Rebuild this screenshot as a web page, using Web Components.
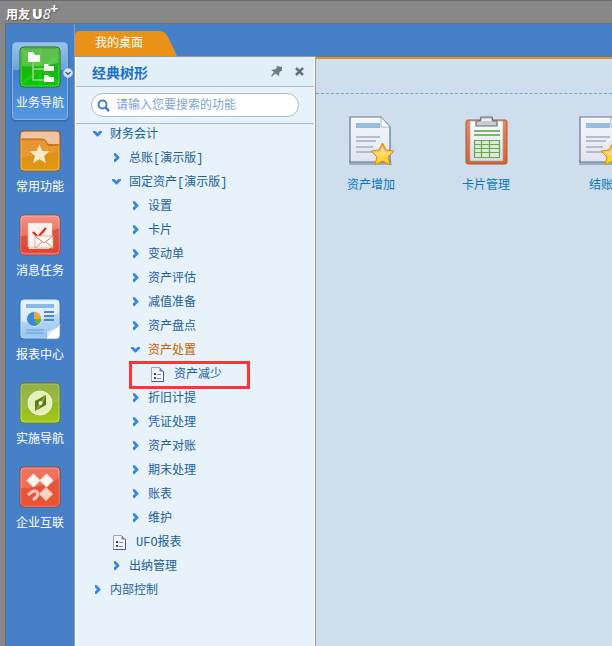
<!DOCTYPE html>
<html lang="zh-CN">
<head>
<meta charset="utf-8">
<title>用友 U8+</title>
<style>
    html, body {
        margin: 0;
        height: 100%;
    }
    body {
        background: #878787;
        font: 12px/16px "Liberation Mono", "Noto Sans CJK SC", monospace;
        overflow: hidden;
    }
</style>
</head>
<body>
<u8-shell>
    <u8-brand slot="brand"></u8-brand>
    <u8-nav slot="nav">
        <nav-item icon="tree" active>业务导航</nav-item>
        <nav-item icon="folder">常用功能</nav-item>
        <nav-item icon="mail">消息任务</nav-item>
        <nav-item icon="report">报表中心</nav-item>
        <nav-item icon="compass">实施导航</nav-item>
        <nav-item icon="link">企业互联</nav-item>
    </u8-nav>
    <u8-tab slot="tabs">我的桌面</u8-tab>
    <tree-panel heading="经典树形" hint="请输入您要搜索的功能">
        <tree-branch label="财务会计" open>
            <tree-branch label="总账[演示版]"></tree-branch>
            <tree-branch label="固定资产[演示版]" open>
                <tree-branch label="设置"></tree-branch>
                <tree-branch label="卡片"></tree-branch>
                <tree-branch label="变动单"></tree-branch>
                <tree-branch label="资产评估"></tree-branch>
                <tree-branch label="减值准备"></tree-branch>
                <tree-branch label="资产盘点"></tree-branch>
                <tree-branch label="资产处置" open current>
                    <tree-leaf marked>资产减少</tree-leaf>
                </tree-branch>
                <tree-branch label="折旧计提"></tree-branch>
                <tree-branch label="凭证处理"></tree-branch>
                <tree-branch label="资产对账"></tree-branch>
                <tree-branch label="期末处理"></tree-branch>
                <tree-branch label="账表"></tree-branch>
                <tree-branch label="维护"></tree-branch>
            </tree-branch>
            <tree-leaf>UFO报表</tree-leaf>
            <tree-branch label="出纳管理"></tree-branch>
        </tree-branch>
        <tree-branch label="内部控制"></tree-branch>
    </tree-panel>
    <u8-desktop>
        <desk-item icon="doc">资产增加</desk-item>
        <desk-item icon="clipboard">卡片管理</desk-item>
        <desk-item icon="doc">结账</desk-item>
    </u8-desktop>
</u8-shell>

<script>
// rounded tile with a top and bottom colour, shared by the nav icons
const tile = (name, top, bottom, edge, inner) => `
    <svg viewBox="0 0 42 42" width="42" height="42" aria-hidden="true">
        <defs>
            <linearGradient id="${name}" x1="0" y1="0" x2="0" y2="1">
                <stop offset="0" stop-color="${top}"/>
                <stop offset="1" stop-color="${bottom}"/>
            </linearGradient>
        </defs>
        <rect x="1" y="1" width="40" height="40" rx="4" fill="url(#${name})" stroke="${edge}"/>
        <rect x="2" y="2" width="38" height="38" rx="3" fill="none" stroke="#fff" stroke-opacity=".35"/>
        ${inner}
    </svg>`;

const doc = `
    <svg viewBox="0 0 48 50" width="48" height="50" aria-hidden="true">
        <defs>
            <linearGradient id="paper" x1="0" y1="0" x2="0" y2="1">
                <stop offset="0" stop-color="#f4f8fd"/><stop offset="1" stop-color="#e2e5ee"/>
            </linearGradient>
            <linearGradient id="gold" x1="0" y1="0" x2="0" y2="1">
                <stop offset="0" stop-color="#f59d1c"/><stop offset=".5" stop-color="#ffd35a"/><stop offset="1" stop-color="#ffd800"/>
            </linearGradient>
        </defs>
        <path d="M2 44h42l1 5H2z" fill="#7e8da3" opacity=".6"/>
        <path d="M3 1h31l9 10v35H3z" fill="url(#paper)" stroke="#65759c" stroke-width="1.200"/>
        <path d="M34 1v10h9z" fill="#fff" stroke="#98a6ba" stroke-width=".8"/>
        <path d="M9 7h24v5H9z" fill="#93bee1"/>
        <path d="M9 21h24M9 25h20M9 31h17M9 36h17" stroke="#b6bcd0" stroke-width="1.800"/>
        <path d="M35.500 27l3.500 7 8 1-6 6 2 8-7.500-4-7.500 4 2-8-6-6 8-1z" fill="url(#gold)" stroke="#d88913" stroke-linejoin="round"/>
        <path d="M35.500 30l2.500 6 6 .5-9 3-8-3 6-.5z" fill="#ffe9a8" opacity=".55"/>
    </svg>`;

const clipboard = `
    <svg viewBox="0 0 48 50" width="48" height="50" aria-hidden="true">
        <defs>
            <linearGradient id="board" x1="0" y1="0" x2="0" y2="1">
                <stop offset="0" stop-color="#e08b63"/><stop offset="1" stop-color="#cf6334"/>
            </linearGradient>
            <linearGradient id="sheet" x1="0" y1="0" x2="0" y2="1">
                <stop offset="0" stop-color="#fff"/><stop offset="1" stop-color="#d9dae4"/>
            </linearGradient>
        </defs>
        <rect x="4" y="4" width="41" height="44" rx="2" fill="url(#board)" stroke="#b9572f"/>
        <path d="M8 5h33v40H8z" fill="url(#sheet)" stroke="#a9a4ac" stroke-width=".7"/>
        <path d="M14 10V6q0-1 1-1h3l1-4h11l1 4h3q1 0 1 1v4z" fill="#c6ced3" stroke="#666d75" stroke-width="1.200"/>
        <path d="M20 4h9" stroke="#eef2f5" stroke-width="2"/>
        <path d="M12 15h26M12 19h26" stroke="#80b46c" stroke-width="2"/>
        <path d="M12.500 24.500h25v17h-25z" fill="#dcebd6" stroke="#6ba657" stroke-width="1.200"/>
        <path d="M12 28.500h26M12 32.500h26M12 36.500h26M19.500 24v17M27.500 24v17" stroke="#6ba657" stroke-width="1.200"/>
    </svg>`;

const icons = {
    tree: tile('g1', '#2f9f1c', '#06c800', '#147a14', `
        <path d="M2 4l38 34M40 10L2 38M21 2v38" stroke="#5de34c" stroke-opacity=".22" stroke-width="3"/>
        <path d="M3 3h36v14Q20 22 3 20z" fill="#b6e8a5" opacity=".38"/>
        <path d="M14 17v17h12M14 23h12" fill="none" stroke="#91dc86" stroke-width="1.500"/>
        <path d="M9 6h5l2 3h5v7H9zM25 18h4l1 2h5v5H25zM25 29h4l1 2h5v5H25z" fill="#fbfff5"/>`),
    folder: tile('g2', '#df8219', '#e09a10', '#955b20', `
        <path d="M2 4q0-2 2-2h34q2 0 2 2v10H29l-4-5H2z" fill="#f4c4a2"/>
        <path d="M2 9h21q4 0 6 6h11" fill="none" stroke="#b56616"/>
        <path d="M2 10h21q4 0 6 6h11v6Q20 24 2 28z" fill="#f1a74f" opacity=".45"/>
        <path d="M20.500 13.500l3 7 8 .5-6 5 2 8-7-4.500-7 4.500 2-8-6-5 8-.5z" fill="#fbeac8" stroke="#c98022" stroke-width=".6"/>`),
    mail: tile('g3', '#ee9385', '#e8503c', '#9c4a57', `
        <path d="M2 22Q22 22 40 14v24H2z" fill="#d93928" opacity=".55"/>
        <path d="M11 11v23h19" fill="none" stroke="#ffd9cf" stroke-width="2"/>
        <path d="M9 9h24v24H9z" fill="#fbf1ef" stroke="#e9b8b0" stroke-width=".6"/>
        <path d="M14 18l5 5 8-9" fill="none" stroke="#dc3424" stroke-width="2.400"/>
        <path d="M16 22h18v12H16z" fill="#fff8ef" stroke="#d3a595" stroke-width=".8"/>
        <path d="M16 22l9 7 9-7M16 34l7-6M34 34l-7-6" fill="none" stroke="#bd8a7b"/>`),
    report: tile('g4', '#d3e8fb', '#95c5f0', '#3273b4', `
        <path d="M2 3h38v12Q20 24 2 24z" fill="#f4faff" opacity=".6"/>
        <path d="M7 6h28v4H7z" fill="#8bb8e8"/>
        <path d="M25 14h10M25 18h10M25 22h10" stroke="#4c86cd" stroke-width="1.800"/>
        <path d="M7 32h18M7 35h18" stroke="#5f9bd8" stroke-width="1.200"/>
        <circle cx="15" cy="21" r="7.500" fill="#3a8bd4" stroke="#d2e9fb"/>
        <path d="M15 21v-7a7 7 0 0 1 7 7z" fill="#f4a82c"/>
        <path d="M15 21h7a7 7 0 0 1-4 6z" fill="#6ab23b"/>
        <path d="M41 25v12q0 4-4 4H27q2-3 1-8 7 1 13-8z" fill="#fff" stroke="#6b9fd3" stroke-width=".8"/>
        <path d="M41 25q-5 7-13 8 1 5-1 8z" fill="#dcebf9"/>`),
    compass: tile('g5', '#7ea02a', '#a4cc17', '#5d7b2d', `
        <path d="M2 4q0-2 2-2h34q2 0 2 2v16Q20 20 2 30z" fill="#a9c466" opacity=".45"/>
        <circle cx="21" cy="21" r="12" fill="#e6efb9" stroke="#f4f8dc"/>
        <path d="M27 13v10l-11 6V19z" fill="#587b16"/>
        <path d="M16 29l4-8 3 2zM27 13l-7 8 4 0z" fill="#87a540"/>
        <circle cx="21.500" cy="21" r="2" fill="#f1f5d3"/>`),
    link: tile('g6', '#ec7660', '#fa6840', '#9c3c45', `
        <path d="M2 22Q22 22 40 12v28H2z" fill="#d83a20" opacity=".45"/>
        <path d="M14.500 8l6.500 6.500-6.500 6.500L8 14.500zM27.500 8l6.500 6.500-6.500 6.500-6.500-6.500z" fill="#fff5ee" stroke="#fff0e9" stroke-linejoin="round"/>
        <path d="M27 21.500l6.500 6.500-6.500 6.500-6.500-6.500z" fill="#fcd2c6" stroke="#fcd2c6" stroke-linejoin="round"/>
        <path d="M9 29q6-6 9-3 3 3-4 8" fill="none" stroke="#fbc9bd" stroke-width="3"/>`),
    doc,
    clipboard
};

class U8Shell extends HTMLElement {
    constructor(){
        super();
        this.attachShadow({mode:'open'});
        this.shadowRoot.innerHTML = `
            <style>
            :host {
                display: flex;
                flex-direction: column;
                height: 100vh;
            }
            header {
                box-sizing: border-box;
                height: 23px;
                border-top: 1px solid #6b6b6b;
                background: #878787;
            }
            .frame {
                flex: 1;
                display: flex;
                min-height: 0;
                margin-left: 5px;
                border-top: 1px solid #6a6e76;
                border-left: 1px solid #6a6e76;
                background: #4681c8;
            }
            .side {
                border-right: 1px solid #8e9dae;
            }
            main {
                flex: 1;
                min-width: 0;
                display: flex;
                flex-direction: column;
            }
            .tabs {
                display: flex;
                align-items: flex-end;
                height: 32px;
            }
            .work {
                flex: 1;
                display: flex;
                min-height: 0;
            }
            </style>
            <header><slot name="brand"></slot></header>
            <div class="frame">
                <div class="side"><slot name="nav"></slot></div>
                <main>
                    <div class="tabs"><slot name="tabs"></slot></div>
                    <div class="work"><slot></slot></div>
                </main>
            </div>`;
    }
}

class U8Brand extends HTMLElement {
    constructor(){
        super();
        this.attachShadow({mode:'open'});
        this.shadowRoot.innerHTML = `
            <style>
            :host {
                display: flex;
                align-items: center;
                gap: 2px;
                padding: 4px 0 0 6px;
                color: #fff;
                line-height: 18px;
                text-shadow: 1px 1px 1px #555;
            }
            .cn {
                font-family: "Noto Sans CJK SC", sans-serif;
                font-weight: bold;
            }
            .u8 {
                display: flex;
                font: 800 14px/18px "Open Sans", sans-serif;
            }
            i {
                font-weight: normal;
            }
            sup {
                font: bold 14px/8px "Open Sans", sans-serif;
            }
            </style>
            <span class="cn">用友</span>
            <span class="u8">U<i>8</i><sup>+</sup></span>`;
    }
}

class U8Nav extends HTMLElement {
    constructor(){
        super();
        this.attachShadow({mode:'open'});
        this.shadowRoot.innerHTML = `
            <style>
            :host {
                display: block;
            }
            nav {
                display: flex;
                flex-direction: column;
                gap: 6px;
                padding: 18px 6px 0;
            }
            </style>
            <nav><slot></slot></nav>`;
    }
}

class NavItem extends HTMLElement {
    constructor(){
        super();
        this.attachShadow({mode:'open'});
    }
    connectedCallback(){
        const active = this.hasAttribute('active');
        this.shadowRoot.innerHTML = `
            <style>
            :host {
                display: block;
                position: relative;
            }
            button {
                box-sizing: border-box;
                display: flex;
                flex-direction: column;
                align-items: center;
                gap: 8px;
                width: 56px;
                height: 78px;
                padding: 3px 0 0;
                border: 1px solid transparent;
                border-radius: 4px;
                background: none;
                color: #fff;
                font: inherit;
                white-space: nowrap;
                cursor: pointer;
            }
            svg {
                flex: none;
            }
            :host([active]) button {
                border-color: #7fb2e6;
                background: linear-gradient(#9cc1e9, #6da2dc 35%, #3f7fcb 36%, #5597e0);
                box-shadow: 0 1px 2px #2a5a9b;
            }
            .more {
                position: absolute;
                right: -5px;
                top: 26px;
            }
            </style>
            <button type="button">${icons[this.getAttribute('icon')]}<span><slot></slot></span></button>
            ${active ? `<svg class="more" width="10" height="10" viewBox="0 0 10 10" aria-hidden="true">
                <circle cx="5" cy="5" r="4.500" fill="#dbe8f6" stroke="#adc5df"/>
                <path d="M2.500 4L5 6.500 7.500 4" fill="none" stroke="#3c5f91" stroke-width="1.500"/>
            </svg>` : ''}`;
    }
}

class U8Tab extends HTMLElement {
    constructor(){
        super();
        this.attachShadow({mode:'open'});
        this.shadowRoot.innerHTML = `
            <style>
            :host {
                display: block;
            }
            button {
                width: 102px;
                height: 25px;
                padding: 0 14px 0 0;
                border: 0;
                background: #e99217;
                color: #fff;
                font: inherit;
                clip-path: path('M0 25V5Q0 0 5 0H84Q90 0 93 6L102 25Z');
                cursor: pointer;
            }
            </style>
            <button type="button"><slot></slot></button>`;
    }
}

class TreePanel extends HTMLElement {
    constructor(){
        super();
        this.attachShadow({mode:'open'});
    }
    connectedCallback(){
        this.shadowRoot.innerHTML = `
            <style>
            :host {
                box-sizing: border-box;
                flex: none;
                width: 241px;
                border-top: 1px solid #999;
                border-right: 1px solid #999;
                background: #e7f2fb;
                box-shadow: inset 1px 1px #fff, inset -1px 0 #fff;
            }
            header {
                display: flex;
                align-items: center;
                gap: 12px;
                height: 29px;
                padding: 0 9px 0 16px;
                margin: 0 1px;
                background: #e1eff9;
                border-bottom: 1px solid #a5bdd5;
            }
            h2 {
                flex: 1;
                margin: 0;
                color: #1b70c9;
                font: bold 14px/20px "Noto Sans CJK SC", sans-serif;
            }
            header button {
                width: 11px;
                height: 11px;
                padding: 0;
                border: 0;
                background: none;
                cursor: pointer;
            }
            svg {
                display: block;
            }
            .search {
                margin: 0 1px;
                padding: 6px 15px;
                border-bottom: 1px solid #a5bdd5;
            }
            label {
                box-sizing: border-box;
                display: flex;
                align-items: center;
                gap: 6px;
                height: 24px;
                padding: 0 6px 0 5px;
                border: 1px solid #a5bdd5;
                border-radius: 12px;
                background: #fff;
            }
            input {
                flex: 1;
                min-width: 0;
                padding: 2px 0 0;
                border: 0;
                outline: 0;
                background: none;
                font: inherit;
                line-height: 20px;
            }
            input::placeholder {
                color: #7ca5d6;
                opacity: 1;
            }
            .tree {
                padding-left: 18px;
            }
            </style>
            <header>
                <h2>${this.getAttribute('heading')}</h2>
                <button type="button" aria-label="固定">
                    <svg width="11" height="11" viewBox="0 0 11 11"><path d="M6 0l5 1v3.500L8.500 6 8 10 4.500 7.500 1 10.500 0 10l3-4L0 4l5-1z" fill="#6d7985"/></svg>
                </button>
                <button type="button" aria-label="关闭">
                    <svg width="11" height="11" viewBox="0 0 11 11"><path d="M2 2l7 7M9 2L2 9" stroke="#66727d" stroke-width="2.500"/></svg>
                </button>
            </header>
            <div class="search">
                <label>
                    <svg width="13" height="13" viewBox="0 0 13 13" aria-hidden="true">
                        <circle cx="5.500" cy="5.500" r="4" fill="none" stroke="#447fc9" stroke-width="2"/>
                        <path d="M8.500 8.500l3.500 3.500" stroke="#447fc9" stroke-width="2.500"/>
                    </svg>
                    <input type="text" aria-label="搜索" placeholder="${this.getAttribute('hint')}">
                </label>
            </div>
            <div class="tree"><slot></slot></div>`;
    }
}

class TreeBranch extends HTMLElement {
    constructor(){
        super();
        this.attachShadow({mode:'open'});
    }
    connectedCallback(){
        this.shadowRoot.innerHTML = `
            <style>
            :host {
                display: block;
            }
            button {
                display: flex;
                align-items: center;
                gap: 8px;
                width: 100%;
                height: 24px;
                padding: 0 0 2px;
                border: 0;
                background: none;
                color: #1c5f9c;
                font: inherit;
                white-space: nowrap;
                cursor: pointer;
            }
            :host([current]) > button {
                color: #c66300;
            }
            svg {
                flex: none;
                margin-bottom: 4px;
            }
            :host([open]) > button svg {
                transform: rotate(90deg);
            }
            .children {
                display: none;
                padding-left: 19px;
            }
            :host([open]) > .children {
                display: block;
            }
            </style>
            <button type="button">
                <svg width="9" height="9" viewBox="0 0 9 9" aria-hidden="true">
                    <path d="M2 0v2.500l2 2-2 2V9h1.500L7.500 5V4L3.500 0z" fill="#3a86df"/>
                </svg>
                <span>${this.getAttribute('label')}</span>
            </button>
            <div class="children"><slot></slot></div>`;
        this.shadowRoot.querySelector('button').addEventListener('click', () => {
            this.toggleAttribute('open');
        });
    }
}

class TreeLeaf extends HTMLElement {
    constructor(){
        super();
        this.attachShadow({mode:'open'});
        this.shadowRoot.innerHTML = `
            <style>
            :host {
                display: block;
                position: relative;
            }
            a {
                box-sizing: border-box;
                display: flex;
                align-items: center;
                gap: 10px;
                height: 24px;
                padding: 0 0 2px 1px;
                color: #1c5f9c;
                text-decoration: none;
                white-space: nowrap;
            }
            svg {
                margin-bottom: 2px;
            }
            :host([marked])::after {
                content: "";
                position: absolute;
                box-sizing: border-box;
                left: -21px;
                top: -3px;
                width: 121px;
                height: 28px;
                border: 3px solid #fb3537;
                pointer-events: none;
            }
            </style>
            <a href="#">
                <svg width="13" height="15" viewBox="0 0 13 15" aria-hidden="true">
                    <path d="M.5.5h8l4 4v10H.5z" fill="#f5f8ff" stroke="#93a5ce"/>
                    <path d="M12.500 4v10.500H.5" fill="none" stroke="#465896"/>
                    <path d="M8.500.5v4h4z" fill="#7184bb"/>
                    <path d="M3 6h2v2H3zM3 10h2v2H3z" fill="#364670"/>
                    <path d="M6 7.500h4M6 11.500h4" stroke="#7389bd"/>
                </svg>
                <span><slot></slot></span>
            </a>`;
    }
}

class U8Desktop extends HTMLElement {
    constructor(){
        super();
        this.attachShadow({mode:'open'});
        this.shadowRoot.innerHTML = `
            <style>
            :host {
                flex: 1;
                min-width: 0;
                margin-top: 1px;
                overflow: hidden;
                border-top: 2px solid #ea9010;
                background: #cedeed;
            }
            .bar {
                height: 34px;
                border-bottom: 1px dashed #5faedc;
            }
            .items {
                display: flex;
                gap: 15px;
                padding: 22px 0 0 5px;
            }
            </style>
            <div class="bar"></div>
            <div class="items"><slot></slot></div>`;
    }
}

class DeskItem extends HTMLElement {
    constructor(){
        super();
        this.attachShadow({mode:'open'});
    }
    connectedCallback(){
        this.shadowRoot.innerHTML = `
            <style>
            :host {
                flex: none;
                width: 100px;
            }
            a {
                display: flex;
                flex-direction: column;
                align-items: center;
                gap: 12px;
                color: #0878bd;
                text-decoration: none;
            }
            </style>
            <a href="#">${icons[this.getAttribute('icon')]}<span><slot></slot></span></a>`;
    }
}

customElements.define('u8-shell', U8Shell);
customElements.define('u8-brand', U8Brand);
customElements.define('u8-nav', U8Nav);
customElements.define('nav-item', NavItem);
customElements.define('u8-tab', U8Tab);
customElements.define('tree-panel', TreePanel);
customElements.define('tree-branch', TreeBranch);
customElements.define('tree-leaf', TreeLeaf);
customElements.define('u8-desktop', U8Desktop);
customElements.define('desk-item', DeskItem);
</script>
</body>
</html>
